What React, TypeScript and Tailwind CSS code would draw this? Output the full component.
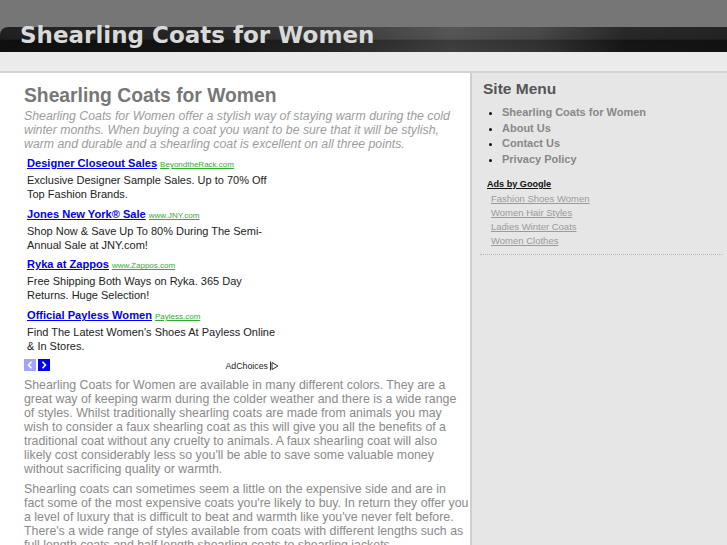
import React from "react";

const ads = [
  {
    title: "Designer Closeout Sales",
    url: "BeyondtheRack.com",
    desc: "Exclusive Designer Sample Sales. Up to 70% Off Top Fashion Brands.",
  },
  {
    title: "Jones New York® Sale",
    url: "www.JNY.com",
    desc: "Shop Now & Save Up To 80% During The Semi-Annual Sale at JNY.com!",
  },
  {
    title: "Ryka at Zappos",
    url: "www.Zappos.com",
    desc: "Free Shipping Both Ways on Ryka. 365 Day Returns. Huge Selection!",
  },
  {
    title: "Official Payless Women",
    url: "Payless.com",
    desc: "Find The Latest Women's Shoes At Payless Online & In Stores.",
  },
];

const menu = ["Shearling Coats for Women", "About Us", "Contact Us", "Privacy Policy"];
const adLinks = ["Fashion Shoes Women", "Women Hair Styles", "Ladies Winter Coats", "Women Clothes"];

export default function App() {
  return (
    <div className="min-h-screen bg-[#e6e6e6] font-['Liberation_Sans',Arial,sans-serif]">
      {/* header */}
      <div className="bg-[#767676] pt-[27px]">
        <div className="flex h-[25px] rounded-tl-[8px] bg-[linear-gradient(to_bottom,rgba(255,255,255,0.07)_0%,rgba(255,255,255,0.05)_48%,rgba(0,0,0,0.2)_54%,rgba(0,0,0,0.14)_100%),linear-gradient(to_right,#121212_0%,#181818_28%,#2c2c2c_45%,#4a4a4a_62%,#3c3c3c_74%,#1a1a1a_86%,#151515_100%)]">
          <h1 className="-mt-[3.5px] h-[23px] pl-[20px] font-['DejaVu_Sans',sans-serif] text-[23px] font-bold leading-[23px] text-[#dadada]">
            Shearling Coats for Women
          </h1>
        </div>
      </div>
      <div className="h-[21px] border-b-2 border-[#d4d4d4] bg-[#ebebeb]" />

      <div className="flex">
        {/* main */}
        <main className="w-[470px] shrink-0 bg-white pb-4 pl-[24px] pr-[1px] pt-[11px]">
          <h2 className="text-[19.3px] font-bold leading-[24px] text-[#777]">Shearling Coats for Women</h2>
          <p className="mt-[1px] pr-[4px] text-[12.3px] italic leading-[14px] text-[#9c9c9c]">
            Shearling Coats for Women offer a stylish way of staying warm during the cold winter months. When buying a
            coat you want to be sure that it will be stylish, warm and durable and a shearling coat is excellent on all
            three points.
          </p>

          {/* ad unit */}
          <div className="mt-[5px] w-[285px] pl-[3px]">
            {ads.map((a) => (
              <div key={a.title} className="mb-[5.7px]">
                <div className="flex h-[15px] items-baseline gap-[3px] leading-[15px]">
                  <a className="text-[11.1px] font-bold text-[#0000ee] underline">{a.title}</a>
                  <a className="text-[8px] text-[#33aa33] underline">{a.url}</a>
                </div>
                <p className="mt-[2px] w-[254px] text-[11px] leading-[14px] text-[#222]">{a.desc}</p>
              </div>
            ))}
          </div>
          <div className="mt-[2px] flex h-[12px] w-[255px] items-end justify-between">
            <div className="flex gap-[2px]">
              <span className="flex h-[12px] w-[12px] items-center justify-center bg-[#a3a3ff]">
                <svg width="6" height="8" viewBox="0 0 6 8">
                  <path d="M4.5 0.8 L1.5 4 L4.5 7.2" stroke="#fff" strokeWidth="1.6" fill="none" />
                </svg>
              </span>
              <span className="flex h-[12px] w-[12px] items-center justify-center bg-[#0000ee]">
                <svg width="6" height="8" viewBox="0 0 6 8">
                  <path d="M1.5 0.8 L4.5 4 L1.5 7.2" stroke="#fff" strokeWidth="1.6" fill="none" />
                </svg>
              </span>
            </div>
            <div className="flex items-center gap-[2px] text-[8.8px] leading-[10px] text-[#222]">
              <span>AdChoices</span>
              <svg width="9" height="10" viewBox="0 0 9 10">
                <path d="M0.5 0.5 V9.5" stroke="#333" strokeWidth="1" />
                <path d="M2 1.5 L8 5 L2 8.5 Z" stroke="#333" strokeWidth="1" fill="none" />
              </svg>
            </div>
          </div>

          <p className="mt-[7px] pr-[4px] text-[12.35px] leading-[14px] text-[#8a8a8a]">
            Shearling Coats for Women are available in many different colors. They are a great way of keeping warm
            during the colder weather and there is a wide range of styles. Whilst traditionally shearling coats are made
            from animals you may wish to consider a faux shearling coat as this will give you all the benefits of a
            traditional coat without any cruelty to animals. A faux shearling coat will also likely cost considerably
            less so you'll be able to save some valuable money without sacrificing quality or warmth.
          </p>
          <p className="mt-[6px] text-[12.35px] leading-[14px] text-[#8a8a8a]">
            Shearling coats can sometimes seem a little on the expensive side and are in fact some of the most expensive
            coats you're likely to buy. In return they offer you a level of luxury that is difficult to beat and warmth
            like you've never felt before. There's a wide range of styles available from coats with different lengths
            such as full length coats and half length shearling coats to shearling jackets.
          </p>
        </main>

        {/* sidebar */}
        <aside className="flex-1 border-l-2 border-[#cfcfcf] bg-[#e6e6e6] pl-[11px] pr-[5px] pt-[6px]">
          <h3 className="text-[15.5px] font-bold leading-[20px] text-[#555]">Site Menu</h3>
          <ul className="mt-[6px] list-disc pl-[19px] text-[11px] font-bold leading-[15.5px] text-[#888] marker:text-[#111]">
            {menu.map((m) => (
              <li key={m}>
                <a>{m}</a>
              </li>
            ))}
          </ul>
          <div className="ml-[4px] mt-[11px] text-[9.1px] font-bold leading-[12px] text-[#111] underline">
            Ads by Google
          </div>
          <div className="ml-[8px] mt-[2px] flex flex-col text-[9.5px] leading-[14px] text-[#9a9a9a]">
            {adLinks.map((l) => (
              <a key={l} className="underline">
                {l}
              </a>
            ))}
          </div>
          <div className="-ml-[3px] mt-[6px] border-t border-dotted border-[#b5b5b5]" />
        </aside>
      </div>
    </div>
  );
}
